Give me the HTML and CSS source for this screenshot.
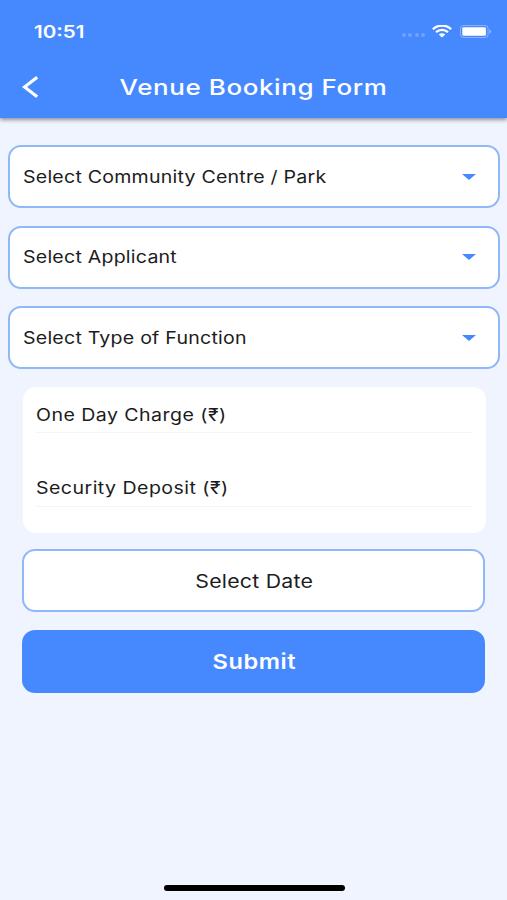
FILE: index.html
```html
<!DOCTYPE html>
<html lang="en">

<head>
    <meta charset="UTF-8">
    <meta name="viewport" content="width=device-width, initial-scale=1.0">
    <title>Venue Booking Form</title>
    <link rel="stylesheet" href="styles.css">
</head>

<body>
    <header class="header">
        <div class="status-bar">
            <span class="time">10:51</span>
            <div class="status-icons">
                <div class="signal"><i></i><i></i><i></i><i></i></div>
                <svg class="wifi" width="20" height="13" viewBox="0 0 20 13">
                    <path d="M.8 4.2C6 -.7 14 -.7 19.2 4.2" />
                    <path d="M4 7.1C7.4 4 12.6 4 16 7.1" />
                    <path class="wifi-dot" d="M6.8 9.5C8.6 7.9 11.4 7.9 13.2 9.5L10 12.4Z" />
                </svg>
                <svg width="32" height="13" viewBox="0 0 32 13">
                    <rect x=".5" y=".5" width="27.5" height="12" rx="3" fill="none" stroke="#fff" stroke-opacity=".35" />
                    <rect x="2.3" y="2.3" width="23.6" height="8.4" rx="1.3" fill="#fff" />
                    <path d="M29.3 4.3C31.7 5.2 31.7 7.8 29.3 8.7Z" fill="#fff" fill-opacity=".4" />
                </svg>
            </div>
        </div>
        <div class="title-bar">
            <svg class="back" width="18" height="24" viewBox="0 0 18 24">
                <path d="M15.2 2.2L2.5 12L15.2 21.8" />
            </svg>
            <h1 class="title">Venue Booking Form</h1>
        </div>
    </header>

    <main class="form">
        <div class="select">
            <span class="label">Select Community Centre / Park</span>
            <span class="arrow"></span>
        </div>
        <div class="select">
            <span class="label">Select Applicant</span>
            <span class="arrow"></span>
        </div>
        <div class="select">
            <span class="label">Select Type of Function</span>
            <span class="arrow"></span>
        </div>

        <div class="charges">
            <div class="charge"><span class="label">One Day Charge (₹)</span></div>
            <div class="charge"><span class="label">Security Deposit (₹)</span></div>
        </div>

        <button class="btn btn-date"><span>Select Date</span></button>
        <button class="btn btn-submit"><span>Submit</span></button>
    </main>

    <div class="home-indicator"></div>
</body>

</html>
```
FILE: styles.css
```css
* {
    box-sizing: border-box;
    margin: 0;
    padding: 0;
}

body {
    height: 900px;
    display: flex;
    flex-direction: column;
    font-family: Inter, "Liberation Sans", sans-serif;
    background-color: #f0f4fe;
    color: #1c1c1c;
    overflow: hidden;
}

.header {
    height: 118px;
    background-color: #4689ff;
    color: #fff;
    box-shadow: 0 2px 4px rgba(0, 0, 0, .4);
}

.status-bar {
    height: 62px;
    padding: 0 15px 0 34px;
    display: flex;
    align-items: center;
    justify-content: space-between;
}

.time {
    padding-top: 1px;
    font-size: 17px;
    font-weight: 600;
    transform: scaleX(1.21);
    transform-origin: left;
}

.status-icons {
    display: flex;
    align-items: center;
}

.signal {
    display: flex;
    gap: 2.5px;
    margin: 8px 7px 0 0;
}

.signal i {
    width: 4px;
    height: 4px;
    border-radius: 50%;
    background-color: rgba(255, 255, 255, .22);
}

.wifi {
    margin-right: 8px;
    fill: none;
    stroke: #fff;
    stroke-width: 2.2;
}

.wifi-dot {
    fill: #fff;
    stroke: none;
}

.title-bar {
    height: 50px;
    display: flex;
    align-items: center;
    padding: 0 22px;
}

.back {
    fill: none;
    stroke: #fff;
    stroke-width: 3.2;
}

.title {
    flex: 1;
    margin-right: 18px;
    text-align: center;
    font-size: 22px;
    font-weight: 500;
    letter-spacing: .5px;
    transform: scaleX(1.18);
}

.form {
    padding: 27px 7px 0 8px;
}

.select {
    height: 63px;
    margin-bottom: 17.7px;
    padding: 0 22px 0 13px;
    display: flex;
    align-items: center;
    justify-content: space-between;
    background-color: #fff;
    border: 2px solid #90b7fa;
    border-radius: 13px;
}

.label {
    display: inline-block;
    font-size: 17px;
    letter-spacing: .2px;
    white-space: nowrap;
    transform: scaleX(1.15);
    transform-origin: left;
}

.arrow {
    border: 7px solid transparent;
    border-top: 6px solid #4689ff;
    border-bottom: 0;
}

.charges {
    height: 146px;
    margin: 0 14px 16px 14.5px;
    padding: 0 14px 0 13px;
    background-color: #fff;
    border-radius: 13px;
}

.charge {
    height: 46px;
    padding-top: 17.5px;
    border-bottom: 1px solid #f5f5f7;
    line-height: 21px;
}

.charge .label {
    letter-spacing: .4px;
}

.charge + .charge {
    margin-top: 28px;
    padding-top: 16.5px;
}

.btn {
    display: block;
    width: 463px;
    height: 63px;
    margin: 0 14px 18px 14.4px;
    font-family: inherit;
    border: 0;
    border-radius: 13px;
}

.btn span {
    display: inline-block;
    transform: scaleX(1.15);
}

.btn-date {
    background-color: #fff;
    border: 2px solid #90b7fa;
    color: #1c1c1c;
    font-size: 18.5px;
    letter-spacing: .2px;
}

.btn-submit {
    background-color: #4689ff;
    color: #fff;
    font-size: 20.5px;
    font-weight: 600;
    letter-spacing: .5px;
}

.home-indicator {
    width: 181px;
    height: 6px;
    margin: auto auto 9px 164px;
    border-radius: 3px;
    background-color: #000;
}
```
